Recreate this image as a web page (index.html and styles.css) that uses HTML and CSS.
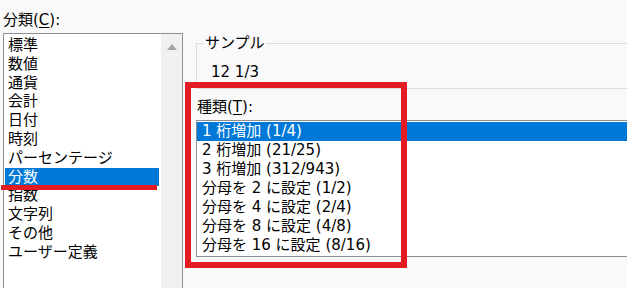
FILE: index.html
```html
<!DOCTYPE html>
<html lang="ja">
<head>
<meta charset="utf-8">
<title>分数</title>
<link rel="stylesheet" href="styles.css">
</head>
<body>
<div class="dialog">
  <div class="left">
    <div class="label">分類(<u>C</u>):</div>
    <div class="listbox cat">
      <ul class="items">
        <li>標準</li>
        <li>数値</li>
        <li>通貨</li>
        <li>会計</li>
        <li>日付</li>
        <li>時刻</li>
        <li>パーセンテージ</li>
        <li class="sel">分数</li>
        <li>指数</li>
        <li>文字列</li>
        <li>その他</li>
        <li>ユーザー定義</li>
      </ul>
      <div class="scrollbar"><span class="arrow"></span></div>
    </div>
  </div>
  <div class="right">
    <fieldset class="sample">
      <legend>サンプル</legend>
      <div class="value">12 1/3</div>
    </fieldset>
    <div class="label type-label">種類(<u>T</u>):</div>
    <ul class="listbox types">
      <li class="sel">1 桁増加 (1/4)</li>
      <li>2 桁増加 (21/25)</li>
      <li>3 桁増加 (312/943)</li>
      <li>分母を 2 に設定 (1/2)</li>
      <li>分母を 4 に設定 (2/4)</li>
      <li>分母を 8 に設定 (4/8)</li>
      <li>分母を 16 に設定 (8/16)</li>
    </ul>
  </div>
  <div class="mark mark-box"></div>
  <div class="mark mark-line"></div>
</div>
</body>
</html>
```
FILE: styles.css
```css
* { box-sizing: border-box; }
html, body {
  margin: 0;
  padding: 0;
  background: #f9f9f9;
}
body {
  width: 627px;
  height: 288px;
  overflow: hidden;
  font-family: "DejaVu Sans", "Noto Sans CJK JP", sans-serif;
  font-size: 15px;
  color: #000;
}
ul { list-style: none; margin: 0; padding: 0; }
u { text-decoration: underline; text-underline-offset: 2px; }

.dialog {
  position: relative;
  display: flex;
  width: 627px;
  height: 288px;
}

.left {
  width: 183px;
  padding-left: 3px;
  flex: none;
  display: flex;
  flex-direction: column;
}
.label {
  height: 33px;
  padding-top: 11px;
  line-height: 18px;
  white-space: nowrap;
}
.listbox {
  background: #fff;
  border: 1px solid #8f8f8f;
  border-right: none;
}
.listbox.cat {
  border-right: 1px solid #8f8f8f;
  border-bottom: none;
  flex: 1;
  display: flex;
}
.cat .items {
  flex: 1;
  padding: 2px 2px 0 1px;
}
.cat li {
  height: 18.8px;
  line-height: 18.8px;
  padding-left: 3px;
  white-space: nowrap;
}
li.sel {
  background: #0078d7;
  color: #fff;
}
.scrollbar {
  width: 21px;
  flex: none;
  background: #f0f0f0;
  display: flex;
  justify-content: center;
  padding-top: 10px;
}
.arrow {
  width: 0;
  height: 0;
  border-left: 5px solid transparent;
  border-right: 5px solid transparent;
  border-bottom: 6px solid #a3a3a3;
}

.right {
  flex: 1;
  padding-top: 34px;
  min-width: 0;
}
.sample {
  margin: 0 0 0 13px;
  padding: 0 0 7px 14px;
  border: 1px solid #dcdcdc;
  border-right: none;
  min-width: 0;
}
.sample legend {
  margin-left: -7px;
  padding: 0 1px;
  line-height: 18px;
}
.sample .value {
  padding-top: 11px;
  line-height: 18px;
}
.type-label {
  height: auto;
  padding-top: 0;
  margin: 9px 0 4px 14px;
}
.listbox.types {
  margin-left: 13px;
  padding: 1px 0 1px 0;
}
.types li {
  height: 19px;
  line-height: 19px;
  padding-left: 5px;
  white-space: nowrap;
}

.mark {
  position: absolute;
  pointer-events: none;
}
.mark-box {
  left: 185px;
  top: 82px;
  width: 222px;
  height: 186px;
  border: 6px solid #e31b23;
}
.mark-line {
  left: 1px;
  top: 185px;
  width: 156px;
  height: 5px;
  background: #e31b23;
}
```
